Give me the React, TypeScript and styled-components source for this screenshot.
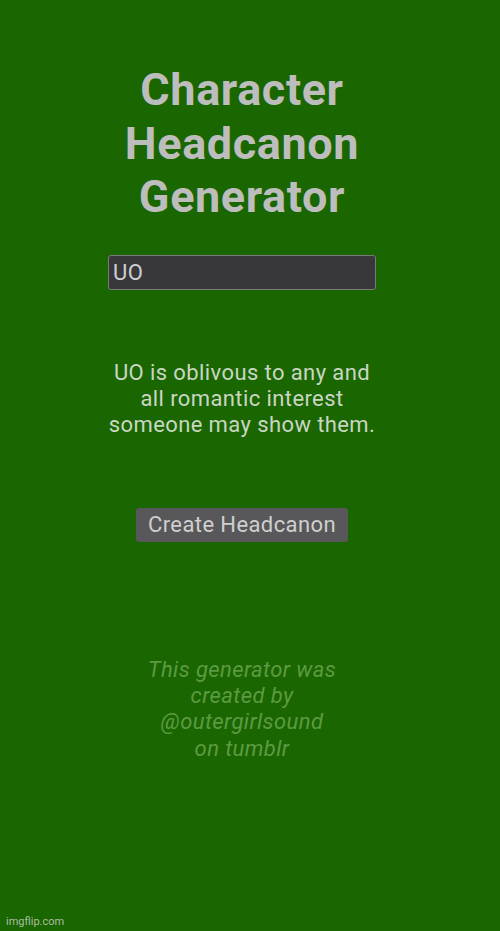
import React, { useState } from "react";
import styled, { createGlobalStyle } from "styled-components";

const GlobalStyle = createGlobalStyle`
  html, body {
    margin: 0;
    padding: 0;
    background: #1a6600;
  }
  body {
    font-family: Roboto, "Noto Sans", sans-serif;
  }
`;

const Page = styled.div`
  position: relative;
  min-height: 931px;
  background: #1a6600;
  display: flex;
  justify-content: center;
  padding-right: 16px;
  box-sizing: border-box;
`;

const Column = styled.main`
  width: 268px;
  display: flex;
  flex-direction: column;
  align-items: center;
  padding-top: 63px;
`;

const Title = styled.h1`
  margin: 0;
  font-size: 45px;
  line-height: 53.5px;
  letter-spacing: 0.6px;
  font-weight: 700;
  color: #bdbdbd;
  text-align: center;
  white-space: nowrap;
`;

const NameInput = styled.input`
  margin-top: 31px;
  width: 100%;
  height: 35px;
  box-sizing: border-box;
  background: #38383b;
  border: 1px solid #7a7a7a;
  border-radius: 3px;
  color: #cfcfcf;
  font-family: Roboto, sans-serif;
  font-size: 22px;
  letter-spacing: 0.4px;
  padding: 0 4px;
  outline: none;
`;

const Result = styled.p`
  margin: 70px 0 0;
  width: 272px;
  font-size: 22px;
  line-height: 26px;
  letter-spacing: 0.4px;
  color: #c9d6c2;
  text-align: center;
`;

const CreateButton = styled.button`
  margin-top: 70px;
  height: 34px;
  padding: 0 12px;
  background: #58585a;
  border: none;
  border-radius: 3px;
  color: #cfcfcf;
  font-family: Roboto, sans-serif;
  font-size: 22px;
  letter-spacing: 0.4px;
  cursor: pointer;
`;

const Credit = styled.p`
  margin: 115px 0 0;
  width: 192px;
  font-size: 22px;
  line-height: 26.4px;
  letter-spacing: 0.4px;
  font-style: italic;
  color: #5c9a43;
  text-align: center;
`;

const Watermark = styled.span`
  position: absolute;
  left: 6px;
  bottom: 3px;
  font-family: Roboto, sans-serif;
  font-size: 11px;
  color: rgba(220, 220, 220, 0.75);
`;

export default function App() {
  const [name, setName] = useState("UO");
  return (
    <>
      <GlobalStyle />
      <Page>
        <Column>
          <Title>
            Character
            <br />
            Headcanon
            <br />
            Generator
          </Title>
          <NameInput value={name} onChange={(e) => setName(e.target.value)} />
          <Result>
            {name} is oblivous to any and all romantic interest someone may show them.
          </Result>
          <CreateButton>Create Headcanon</CreateButton>
          <Credit>This generator was created by @outergirlsound on tumblr</Credit>
        </Column>
        <Watermark>imgflip.com</Watermark>
      </Page>
    </>
  );
}
